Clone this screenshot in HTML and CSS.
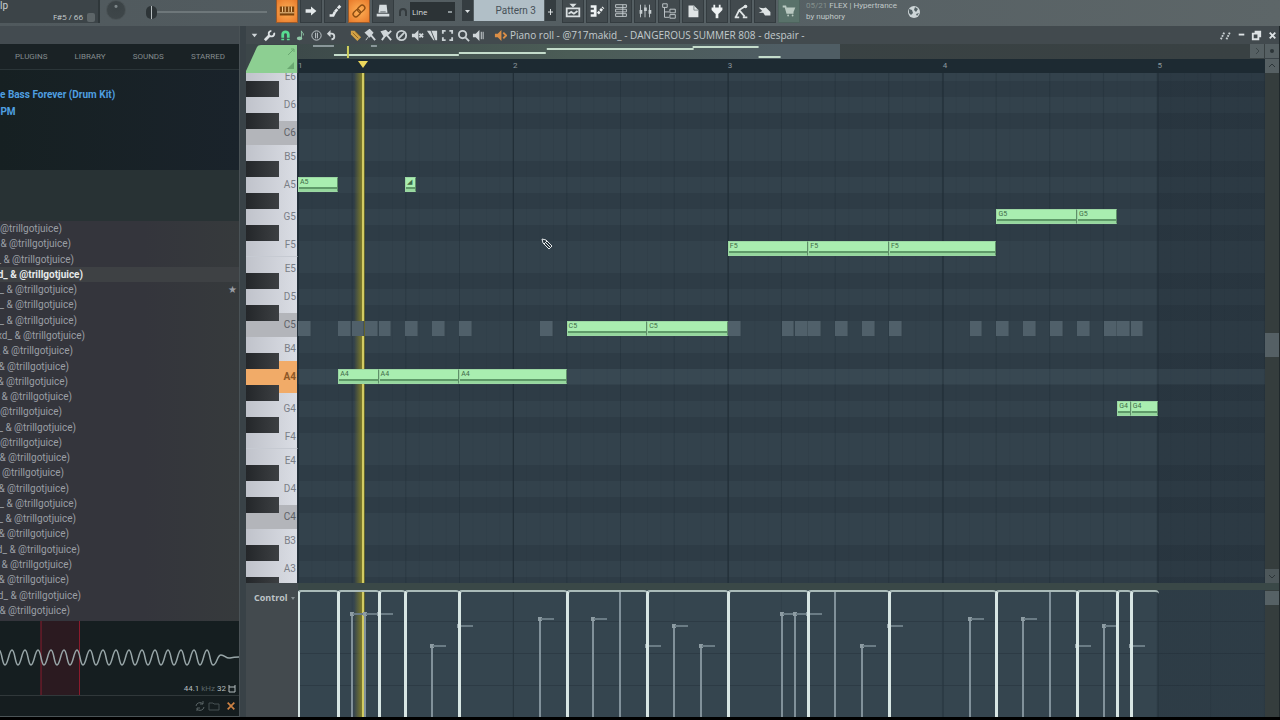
FILE: index.html
```
<!DOCTYPE html>
<html lang="en">
<head>
<meta charset="utf-8">
<title>Piano roll</title>
<link rel="stylesheet" href="styles.css">
</head>
<body>
<div class="app">
	<!-- S toolbar -->
	<header class="toolbar">
		<div class="hint">
			<span class="hint_file">lp</span>
			<span class="hint_note">F#5 / 66 <i class="hint_led"></i></span>
		</div>
		<span class="knob"></span>
		<input class="pitch" type="range" min="0" max="100" value="0" aria-label="Pitch">
		<div class="modes">
			<button class="bt on" title="Typing keyboard"><svg viewBox="0 0 20 20"><path d="M2 5h16v10H2z" fill="#7a430d"/><path d="M5 5v6M8 5v6M12 5v6M15 5v6M2 12h16" stroke="#ffd79b"/></svg></button>
			<button class="bt" title="Step"><svg viewBox="0 0 20 20"><path d="M4 8h6V5l6 5-6 5v-3H4z" fill="#e3e8ea"/></svg></button>
			<button class="bt" title="Slide"><svg viewBox="0 0 20 20"><path d="M4 15h4l2-4" stroke="#e3e8ea" stroke-width="3"/><path d="M10 11l6-7" stroke="#e3e8ea" stroke-width="3" stroke-dasharray="4 1"/></svg></button>
			<button class="bt on" title="Link"><svg viewBox="0 0 20 20"><g transform="rotate(-45 10 10)" stroke="#8c4d12" stroke-width="1.5"><rect x="2" y="7" width="9" height="6" rx="3"/><rect x="9" y="7" width="9" height="6" rx="3"/></g></svg></button>
			<button class="bt" title="Metronome"><svg viewBox="0 0 20 20"><path d="M6 3h8l1 9H5zM3 13h14v3H3z" fill="#d5dcdf"/><path d="M7 11h6" stroke="#596265"/></svg></button>
		</div>
		<svg class="magnet" viewBox="0 0 10 10"><path d="M2 9V5a3 3 0 0 1 6 0v4" stroke="#343b3e" stroke-width="2"/></svg>
		<select class="snap" aria-label="Snap"><option>Line</option></select>
		<div class="pattern">
			<button class="bt_s" title="Patterns"><svg viewBox="0 0 11 20"><path d="M3 9h5l-2.500 3z" fill="#dce1e3"/></svg></button>
			<input type="text" value="Pattern 3" aria-label="Pattern name">
			<button class="bt_s" title="New pattern"><svg viewBox="0 0 11 20"><path d="M3 11h5M5.500 8v6" stroke="#dce1e3"/></svg></button>
		</div>
		<div class="windows">
			<button class="bt" title="Playlist"><svg viewBox="0 0 20 20"><path d="M3 7h14v9H3zM5 13l3-2 3 2 4-3" stroke="#d9dfe1" stroke-width="2"/><path d="M6 2h8l-4 4z" fill="#d9dfe1"/></svg></button>
			<button class="bt" title="Piano roll"><svg viewBox="0 0 20 20"><path d="M3 5h5v10H3M3 10h6" stroke="#eef2f3" stroke-width="3"/><path d="M11 13l6-7" stroke="#eef2f3" stroke-width="3" stroke-dasharray="3 1"/></svg></button>
			<button class="bt" title="Channel rack"><svg viewBox="0 0 20 20"><path d="M4 3h12v3H4zM4 8h12v3H4zM4 13h12v3H4zM12 3v13" stroke="#c7ced1"/></svg></button>
			<button class="bt" title="Mixer"><svg viewBox="0 0 20 20"><path d="M5 3v14M10 3v14M15 3v14" stroke="#c7ced1"/><path d="M4 9h3v4H4zM9 6h3v4H9zM14 9h3v4h-3z" fill="#c7ced1"/></svg></button>
			<button class="bt" title="Browser"><svg viewBox="0 0 20 20"><path d="M3 2h5v4H3zM5 6v11h5M5 11h5M11 8h6v4h-6zM11 14h6v4h-6z" stroke="#c7ced1"/></svg></button>
			<button class="bt" title="Project"><svg viewBox="0 0 20 20"><path d="M5 4h6l5 5v8H5z" fill="#dfe4e5"/><path d="M11 4v5h5" stroke="#7b8588"/></svg></button>
			<button class="bt" title="Plugins"><svg viewBox="0 0 20 20"><path d="M7 3v4M13 3v4" stroke="#eef2f3" stroke-width="2"/><path d="M4 6h12v3l-4 4H8L4 9z" fill="#eef2f3"/><path d="M10 12v6" stroke="#eef2f3" stroke-width="3"/></svg></button>
			<button class="bt" title="Render"><svg viewBox="0 0 20 20"><path d="M4 17L8 9l8-5M8 9l6 7M3 17h5M12 17h5" stroke="#dfe4e5" stroke-width="2"/><circle cx="15" cy="5" r="2" fill="#dfe4e5"/></svg></button>
			<button class="bt" title="Touch"><svg viewBox="0 0 20 20"><path d="M3 6l5 1 3-1 5 5v4h-6l-2-3H3l4-2z" fill="#dfe4e5"/></svg></button>
			<button class="bt shop" title="Shop"><svg viewBox="0 0 20 20"><path d="M3 5h3l2 7h7" stroke="#b9c9c1" stroke-width="2"/><path d="M7 6h10l-2 5H8z" fill="#b9c9c1"/><circle cx="9" cy="15" r="1" fill="#b9c9c1"/><circle cx="14" cy="15" r="1" fill="#b9c9c1"/></svg></button>
		</div>
		<div class="news"><p><span>05/21</span> FLEX | Hypertrance</p><p>by nuphory</p></div>
		<svg class="globe" viewBox="0 0 14 14"><circle cx="7" cy="7" r="6" fill="#cdd5d7"/><path d="M2 4l3 1 1 3-2 2-2-2zM8 2l3 2-2 3-2-2zM9 9l3-1-2 3z" fill="#536064"/></svg>
	</header>
	<!-- E toolbar -->

	<div class="work">
		<!-- S browser -->
		<aside class="browser">
			<div class="browser_head"></div>
			<nav class="tabs"><a href="#">PLUGINS</a><a href="#">LIBRARY</a><a href="#">SOUNDS</a><a href="#">STARRED</a></nav>
			<div class="kit"><p>e Bass Forever (Drum Kit)</p><p>BPM</p></div>
			<div class="kit_foot"></div>
			<ul class="files" id="files"></ul>
			<div class="wave">
				<svg viewBox="0 0 239 74" preserveAspectRatio="none">
					<path d="M41 0h38v74H41z" fill="#2b1a20"/>
					<path d="M41 0v74M79.500 0v74" stroke="#8c1a2c"/>
					<path id="wave" stroke="#97a5a7" stroke-width="1.500"/>
				</svg>
				<span class="rate">44.1 <em>kHz</em> 32 <svg viewBox="0 0 8 8"><path d="M1 2h6v5H1zM0 1h2M6 1h2" stroke="#b4bdbf"/></svg></span>
			</div>
			<div class="browser_foot">
				<button title="Refresh"><svg viewBox="0 0 12 12"><path d="M2 6a4 4 0 0 1 7-2M10 7a4 4 0 0 1-7 2M9 1v3H6M3 11V8h3" stroke="#596365"/></svg></button>
				<button title="Folder"><svg viewBox="0 0 12 12"><path d="M1 3h4l1 1h5v6H1z" stroke="#465053"/></svg></button>
				<button class="bt_close" title="Close"><svg viewBox="0 0 12 12"><path d="M2 2l8 8M10 2l-8 8" stroke="#cd8244" stroke-width="2"/></svg></button>
			</div>
		</aside>
		<!-- E browser -->

		<!-- S piano roll -->
		<main class="roll">
			<div class="titlebar">
				<div class="tools tools_l">
					<button title="Menu"><svg viewBox="0 0 14 14"><path d="M4 5h6l-3 4z" fill="#cfd5d8"/></svg></button>
					<button title="Tools"><svg viewBox="0 0 14 14"><path d="M2 12l5-5" stroke="#dce1e3" stroke-width="3"/><path d="M12 4a3 3 0 1 1-3-2" stroke="#dce1e3" stroke-width="2"/></svg></button>
					<button title="Snap"><svg viewBox="0 0 14 14"><path d="M4 12V6a3 3 0 0 1 6 0v6" stroke="#58dd91" stroke-width="3"/><path d="M2 10h4M8 10h4" stroke="#3f474c"/></svg></button>
					<button title="Stamp"><svg viewBox="0 0 14 14"><path d="M8 10V2c0 2 3 2 2 5" stroke="#8fc7a6"/><ellipse cx="6" cy="10" rx="3" ry="2" fill="#8fc7a6"/></svg></button>
					<button title="Ghosts"><svg viewBox="0 0 14 14"><circle cx="7" cy="7" r="5" stroke="#c5cccf"/><path d="M6 4v6M8 4v6" stroke="#c5cccf"/></svg></button>
					<button title="Undo"><svg viewBox="0 0 14 14"><path d="M4 5h3a3 3 0 0 1 0 6" stroke="#d0d6d9" stroke-width="2"/><path d="M2 5l4-4v8z" fill="#d0d6d9"/></svg></button>
				</div>
				<div class="tools tools_r">
					<button title="Draw"><svg viewBox="0 0 14 14"><path d="M2 2h4l7 7-4 4-7-7z" fill="#d3a247"/><path d="M4 4l6 6M7 3l5 5" stroke="#8a6322"/></svg></button>
					<button title="Paint"><svg viewBox="0 0 14 14"><path d="M2 4l4-3 3 3-3 4zM7 6l5 6" fill="#d0d6d9" stroke="#d0d6d9" stroke-width="2"/><path d="M2 12l3-4" stroke="#d0d6d9"/></svg></button>
					<button title="Drums"><svg viewBox="0 0 14 14"><path d="M2 3l4-1 3 3-4 3zM7 6l5 6M9 5l3-3M2 12l3-4" fill="#d0d6d9" stroke="#d0d6d9" stroke-width="2"/></svg></button>
					<button title="Delete"><svg viewBox="0 0 14 14"><circle cx="7" cy="7" r="5" stroke="#c9d0d3" stroke-width="2"/><path d="M4 10l6-6" stroke="#c9d0d3" stroke-width="2"/></svg></button>
					<button title="Mute"><svg viewBox="0 0 14 14"><path d="M1 5h3l4-4v12L4 9H1z" fill="#d0d6d9"/><path d="M9 5l4 4M13 5L9 9" stroke="#d0d6d9" stroke-width="2"/></svg></button>
					<button title="Slice"><svg viewBox="0 0 14 14"><path d="M1 2h11v10H8z" fill="#d0d6d9"/><path d="M5 1l5 12" stroke="#454d51"/></svg></button>
					<button title="Select"><svg viewBox="0 0 14 14"><path d="M2 5V2h3M9 2h3v3M12 9v3H9M5 12H2V9" stroke="#c9d0d3" stroke-width="2"/></svg></button>
					<button title="Zoom"><svg viewBox="0 0 14 14"><circle cx="6" cy="6" r="4" stroke="#c9d0d3" stroke-width="2"/><path d="M9 9l4 4" stroke="#c9d0d3" stroke-width="2"/></svg></button>
					<button title="Playback"><svg viewBox="0 0 14 14"><path d="M1 5h3l4-4v12L4 9H1z" fill="#d0d6d9"/><path d="M10 3v8M12 3v8" stroke="#d0d6d9"/></svg></button>
				</div>
				<svg class="channel" viewBox="0 0 14 14"><path d="M1 5h3l4-4v12L4 9H1z" fill="#db8e46"/><path d="M10 4l3 3-3 3" stroke="#db8e46" stroke-width="2"/></svg>
				<h1>Piano roll - @717makid_ - DANGEROUS SUMMER 808 - despair -</h1>
				<div class="tools tools_win">
					<button title="Detach"><svg viewBox="0 0 14 14"><path d="M2 11l4-8M8 11l4-8" stroke="#c9d0d3" stroke-width="2" stroke-dasharray="2 1"/></svg></button>
					<button title="Minimize"><svg viewBox="0 0 14 14"><path d="M4 6h6" stroke="#dde2e4" stroke-width="2"/></svg></button>
					<button title="Maximize"><svg viewBox="0 0 14 14"><path d="M3 5h6v6H3zM5 3h6v6" stroke="#dde2e4" stroke-width="2"/></svg></button>
					<button title="Close"><svg viewBox="0 0 14 14"><path d="M4 4l6 6M10 4l-6 6" stroke="#dde2e4" stroke-width="2"/></svg></button>
				</div>
			</div>
			<div class="corner">
				<svg viewBox="0 0 52 29"><path d="M0 29V27L11 3q1-2 4-2H51V29z" fill="#8dcf92"/><path d="M42 11l6-6M45 5h3v3" stroke="#6aa871"/><path d="M41 25l7-7v7z" fill="#6aa871"/></svg>
			</div>
			<div class="minimap">
				<div class="minimap_view"><svg viewBox="0 0 542 15" preserveAspectRatio="none"><path d="M15 2h21M73 2h6" stroke="#8a979a" stroke-width="2"/><path d="M36 11h125M161 9h87M249 5h147M395 3h66M461 13h22" stroke="#c4dccb" stroke-width="2"/><path d="M50 2v12" stroke="#cfd05e" stroke-width="2"/></svg></div>
			</div>
			<div class="mini_bt">
				<button title="Scroll right"><svg viewBox="0 0 14 14"><path d="M6 4l3 3-3 3" stroke="#3a4447"/></svg></button>
				<button title="Zoom"><svg viewBox="0 0 14 14"><circle cx="7" cy="7" r="2" fill="#2c3538"/></svg></button>
			</div>
			<div class="timeline"><span>1</span><span>2</span><span>3</span><span>4</span><span>5</span><i class="marker"></i></div>
			<div class="scroll_top"><button title="Scroll up"><svg viewBox="0 0 14 14"><path d="M4 8l3-3 3 3" stroke="#2c3538"/></svg></button></div>
			<div class="keys" id="keys"></div>
			<div class="grid" id="grid">
				<i class="playhead"></i>
				<svg class="cursor" viewBox="0 0 14 14"><path d="M2 2l4 1 6 6-3 3-6-6z" fill="#26323a" stroke="#e3e8ea"/><path d="M5 5l5 5M7 4l-3 3" stroke="#e3e8ea"/></svg>
			</div>
			<div class="scrollbar"><i class="thumb"></i><button title="Scroll down"><svg viewBox="0 0 14 14"><path d="M4 6l3 3 3-3" stroke="#2c3538"/></svg></button></div>
			<div class="splitter"></div>
			<div class="ctl_name"><button>Control <svg viewBox="0 0 6 6"><path d="M1 2h4L3 5z" fill="#858e92"/></svg></button></div>
			<div class="ctl" id="ctl"><i class="playhead"></i></div>
			<div class="ctl_scroll"><i></i></div>
		</main>
		<!-- E piano roll -->
	</div>
</div>
<script src="script.js"></script>
</body>
</html>
```
FILE: styles.css
```
*{box-sizing:border-box;}
body{margin:0;background-color:#000;font-family:Roboto,"Open Sans",sans-serif;font-size:10px;color:#b0b6b8;}
p,ul,h1{margin:0;padding:0;}
ul{list-style:none;}
a{color:inherit;text-decoration:none;}
button{margin:0;padding:0;border:0;background:none;color:inherit;font:inherit;}
svg{display:block;fill:none;}

.app{display:flex;flex-direction:column;height:100vh;min-height:480px;padding-bottom:3px;overflow:hidden;}
.work{display:flex;flex:1;min-height:0;background-color:#394247;}

/* S toolbar */
.toolbar{display:flex;flex:none;height:26px;background:linear-gradient(to right,#50595d,#566064 60%,#5d6668);overflow:hidden;}
.hint{display:flex;flex-direction:column;width:100px;height:23px;padding-right:3px;background-color:#3c4448;border-right:2px solid #2f373a;color:#c9cfd1;line-height:12px;}
.hint_note{display:flex;justify-content:flex-end;align-items:center;gap:4px;font:8px/10px "Open Sans",sans-serif;}
.hint_led{width:8px;height:9px;background-color:#5d6568;border-radius:2px;}
.knob{width:20px;height:20px;margin:0 20px 0 6px;border:1px solid #4b5356;border-radius:50%;background:radial-gradient(circle at 50% 30%,#7d8689 1px,#3b4346 2px,#3f474a);}
.pitch{-webkit-appearance:none;appearance:none;width:121px;height:24px;margin:0 9px 0 0;background:none;}
.pitch::-webkit-slider-runnable-track{height:2px;background-color:#6e777a;}
.pitch::-webkit-slider-thumb{-webkit-appearance:none;width:11px;height:13px;margin-top:-5px;border-radius:5px;background:linear-gradient(to right,#2d3437 5px,#b7bec0 5px,#b7bec0 6px,#2d3437 6px);}
.modes,.windows{display:flex;gap:2px;}
.bt{width:22px;height:23px;padding:1px;border:1px solid #343c40;border-top:0;background-color:#424a4e;}
.bt.on{background:radial-gradient(circle,#ffb257,#e8792a);border-color:#9a5a2a;}
.bt.shop{background-color:#59726a;border-color:#4e645e;}
.bt svg{width:18px;height:20px;}
.magnet{width:10px;height:24px;margin:0 2px 0 4px;}
.snap{-webkit-appearance:none;appearance:none;width:45px;height:19px;margin-top:2px;padding:0 2px;border:0;border-radius:0;background:linear-gradient(#8d9699,#8d9699) 38px 9px/4px 2px no-repeat #2c3336;color:#d6dbdd;font:8px "Open Sans",sans-serif;}
.pattern{display:flex;gap:1px;width:94px;height:21px;margin:0 6px 0 7px;}
.pattern input{width:70px;padding:0 8px 0 0;border:0;background-color:#b1bfc7;color:#475158;font-family:inherit;font-size:10px;text-align:right;}
.bt_s{width:11px;background-color:#353d41;}
.bt_s svg{width:11px;height:20px;}
.news{margin-left:6px;color:#c0c8c8;font-size:8px;line-height:11px;white-space:nowrap;}
.news span{color:#84908d;}
.globe{width:14px;height:24px;margin-left:10px;}
/* E toolbar */

/* S browser */
.browser{display:flex;flex-direction:column;width:240px;margin-right:6px;border-right:1px solid #4a5256;background-color:#343b3f;}
.browser_head{flex:none;height:18px;background-color:#434b50;}
.tabs{display:flex;flex:none;justify-content:space-between;height:25px;padding:0 14px 0 15px;background-color:#1a2225;color:#838b8d;font-size:8px;line-height:25px;}
.kit{flex:none;height:101px;padding-top:16px;border-top:1px solid #2b3538;background:linear-gradient(to right,#162022,#1a232b);color:#4f9fe0;font-weight:bold;line-height:17px;}
.kit p{white-space:nowrap;}
.kit p+p{text-indent:-6px;}
.kit_foot{flex:none;height:51px;background-color:#283234;}
.files{display:flex;flex:1;flex-direction:column;min-height:0;padding-bottom:3px;background:linear-gradient(to right,#34353c 60%,#363a3c);color:#9a9ea4;overflow:hidden;}
.files li{display:flex;flex:1;justify-content:space-between;align-items:center;min-height:0;padding-right:2px;line-height:15px;white-space:nowrap;}
.files li a{display:flex;justify-content:flex-end;}
.files .sel{background-color:#3e4144;color:#e6e9ea;font-weight:bold;}
.wave{position:relative;flex:none;height:75px;background-color:#151e20;border-bottom:1px solid #30383a;}
.wave>svg{width:100%;height:74px;}
.rate{position:absolute;right:3px;bottom:0;display:flex;gap:2px;align-items:center;color:#b4bdbf;font-size:8px;line-height:12px;}
.rate em{color:#5b6567;font-style:normal;}
.rate svg{width:8px;height:8px;}
.browser_foot{display:flex;flex:none;justify-content:flex-end;align-items:center;gap:2px;height:21px;padding-right:3px;border-bottom:1px solid #4b5457;background-color:#151d1f;}
.browser_foot svg{width:12px;height:12px;}
.browser_foot .bt_close{margin-left:4px;}
.bt_close svg{width:10px;height:10px;}
/* E browser */

/* S piano roll */
.roll{display:grid;flex:1;grid-template-columns:52px 1fr 14px;grid-template-rows:18px 15px 14px minmax(0,1fr) 7px 127px;min-width:0;border-right:1px solid #20282b;}
.titlebar{display:flex;grid-column:1/4;align-items:center;background-color:#424a4e;color:#c3cacd;}
.titlebar svg{width:13px;height:13px;}
.titlebar h1{flex:1;font:10px/18px "Open Sans",sans-serif;white-space:nowrap;}
.tools{display:flex;justify-content:space-between;}
.tools_l{width:90px;margin-left:2px;}
.tools_r{width:136px;margin-left:11px;}
.titlebar .channel{margin:0 3px 0 9px;}
.tools_win{width:60px;}
.corner{grid-row:2/4;background-color:#3c4649;}
.corner svg{width:52px;height:29px;}
.minimap{background:linear-gradient(to right,#3a4343,#394143);}
.minimap_view{width:56%;height:15px;background:linear-gradient(to right,#3d4a4a,#4b5c56 50%,#4f5d64 90%);}
.minimap_view svg{width:100%;height:15px;}
.mini_bt{display:flex;justify-content:flex-end;gap:1px;}
.mini_bt button,.scroll_top button{flex:none;width:14px;height:14px;background-color:#566063;}
.timeline{position:relative;display:grid;grid-template-columns:repeat(4,2fr) 1fr;background-color:#1d2a32;color:#8b989e;font-size:8px;line-height:14px;}
.marker{position:absolute;left:calc(100%*4.8/72);top:2px;margin-left:-4px;border:5px solid transparent;border-top:7px solid #ecd75c;border-bottom:0;}
.keys{overflow:hidden;background-color:#d3d6de;}
.key{position:relative;height:24px;padding-right:1px;border-right:1px solid #23303a;background:linear-gradient(to right,#c0c3cb,#dadde4);color:#7a7e86;line-height:24px;text-align:right;}
.key:first-child{margin-top:-8px;}
.key_D,.key_G,.key_A{height:32px;line-height:32px;}
.key_C{background:#b3b5ba;color:#5c6066;}
.key_F{border-bottom:1px solid #c6cad2;}
.key_on{background:#f1ab68;color:#8e5826;font-weight:bold;}
.key_D:after,.key_E:after,.key_G:after,.key_A:after,.key_B:after{content:"";position:absolute;z-index:1;left:0;bottom:-8px;width:33px;height:16px;background:linear-gradient(to right,#24272a,#3c3f42);}
.grid,.ctl{position:relative;overflow:hidden;}
.grid{background:
	linear-gradient(to right,transparent 88.9%,rgba(24,34,44,.25) 88.9%),
	linear-gradient(to right,#202d36 1px,transparent 1px) 0 0/22.22% 100%,
	linear-gradient(to right,rgba(28,41,50,.3) 1px,transparent 1px) 0 0/5.55% 100%,
	linear-gradient(to right,rgba(28,41,50,.1) 1px,transparent 1px) 0 0/1.388% 100%,
	linear-gradient(#33424c 16px,#2e3c46 16px,#2e3c46 32px,#33424c 32px,#33424c 48px,#2e3c46 48px,#2e3c46 64px,#33424c 64px,#33424c 96px,#2e3c46 96px,#2e3c46 112px,#33424c 112px,#33424c 128px,#2e3c46 128px,#2e3c46 144px,#33424c 144px,#33424c 160px,#2e3c46 160px,#2e3c46 176px,#33424c 176px) 0 -8px/100% 192px;}
.ctl{background:
	linear-gradient(to right,transparent 88.9%,rgba(24,34,44,.25) 88.9%),
	linear-gradient(to right,#26343d 1px,transparent 1px) 0 0/22.22% 100%,
	linear-gradient(#2d3b45 1px,transparent 1px) 0 -1px/100% 32px,
	linear-gradient(to right,rgba(28,41,50,.2) 1px,transparent 1px) 0 0/5.55% 100%,#35454f;}
.note,.ghost,.lit{position:absolute;left:calc(100%*var(--s)/72);top:calc(16px*var(--r) - 8px);width:calc(100%*var(--l)/72);height:15px;}
.note{padding-left:1px;border:1px solid #9bd7a3;border-right-color:#5f8f69;background:linear-gradient(#a9eeb0 9px,#5f9a69 9px,#5f9a69 11px,#95d79d 11px);color:#3f6b49;font-size:7px;line-height:9px;}
.ghost{border-right:1px solid #43525b;background-color:#50606a;}
.lit{background-color:rgba(90,110,120,.15);}
.playhead{position:absolute;left:calc(100%*4.8/72);top:0;bottom:0;width:11px;margin-left:-8px;background:linear-gradient(to right,transparent,#7d7a2a 8px,#d2cb62 8px,#d2cb62 10px,#62632d 10px);}
.cursor{position:absolute;z-index:2;left:25%;top:164px;width:14px;height:14px;}
.scrollbar,.ctl_scroll{position:relative;display:flex;flex-direction:column;justify-content:flex-end;background-color:#353d3d;}
.scrollbar button{height:14px;background-color:#4d575a;}
.thumb{position:absolute;top:51%;left:0;right:0;height:24px;background-color:#556065;}
.splitter{grid-column:1/4;background:linear-gradient(to right,#424a4e 52px,#3a4847 52px);}
.ctl_name{padding-left:8px;background-color:#434a4e;color:#bdc3c6;}
.ctl_name button{display:flex;align-items:center;gap:2px;font:bold 9px/16px "Open Sans",sans-serif;}
.ctl_name svg{width:6px;height:6px;}
.ctl_scroll{justify-content:flex-start;padding-top:1px;}
.ctl_scroll i{height:14px;background-color:#566165;}
.vel,.gvel{position:absolute;bottom:0;left:calc(100%*var(--s)/72);margin-left:-1px;}
.vel{top:0;width:calc(100%*var(--l)/72 + 2px);border:solid #d8e6e4;border-width:2px 0 0 3px;border-top-color:#a9bab8;border-radius:4px 4px 0 0;}
.gvel{height:calc(1%*var(--v));width:15px;border-left:2px solid #81919a;}
.gvel:before{content:"";position:absolute;left:-3px;top:-2px;width:4px;height:4px;background-color:#8d9ca3;}
.gvel:after{content:"";position:absolute;left:0;top:-1px;width:13px;height:2px;background-color:#6b7c85;}
.gvel_full:before,.gvel_full:after{display:none;}
/* E piano roll */
```
FILE: script.js
```
// rows are counted from E6 downwards, start and length are in steps
var notes = [
	['A5', 7, 0, 3], ['◢', 7, 8, .75],
	['A4', 19, 3, 3], ['A4', 19, 6, 6], ['A4', 19, 12, 8],
	['C5', 16, 20, 6], ['C5', 16, 26, 6],
	['F5', 11, 32, 6], ['F5', 11, 38, 6], ['F5', 11, 44, 8],
	['G5', 9, 52, 6], ['G5', 9, 58, 3],
	['G4', 21, 61, 1], ['G4', 21, 62, 2]
];
var ghosts = [0, 3, 4, 5, 6, 8, 10, 12, 18, 32, 36, 37, 38, 40, 42, 44, 50, 52, 54, 56, 58, 60, 61, 62];
var levels = [[4, 81], [5, 81], [6, 81], [10, 56], [12, 72], [18, 77], [22, 77], [24, 100], [26, 56], [28, 72], [30, 56],
	[36, 81], [37, 81], [38, 81], [40, 100], [42, 56], [44, 72], [50, 77], [54, 77], [56, 100], [58, 56], [60, 72], [62, 56]];
var stems = [0, 3, 6, 8, 12, 20, 26, 32, 38, 44, 52, 58, 61, 62, 64];
var keys = 'E6 D6 C6 B5 A5 G5 F5 E5 D5 C5 B4 A4 G4 F4 E4 D4 C4 B3 A3 G3'.split(' ');
// visible tail of each file name and where it ends
var files = [['', 62], ['_ ', 71], ['_ ', 74], ['xd_ ', 83], ['d_ ', 77], ['d_ ', 77], ['d_ ', 77], ['txd_ ', 85], ['_ ', 73],
	['', 69], ['', 68], ['_ ', 72], ['', 62], ['d_ ', 76], ['', 62], ['_ ', 70], ['', 64], ['', 69], ['d_ ', 77],
	['d_ ', 76], ['', 69], ['xd_ ', 80], ['_ ', 72], ['', 69], ['xd_ ', 81], ['_ ', 70]];

function add(parent, tag, cls, text, vars) {
	var el = document.createElement(tag);
	el.className = cls;
	el.textContent = text;
	for (var k in vars) el.style.setProperty(k, vars[k]);
	parent.appendChild(el);
	return el;
}

var grid = document.getElementById('grid');
add(grid, 'i', 'lit', '', {'--r': 19, '--s': 0, '--l': 72});
ghosts.forEach(function (s) {
	add(grid, 'i', 'ghost', '', {'--r': 16, '--s': s, '--l': .95});
});
notes.forEach(function (n) {
	add(grid, 'div', 'note', n[0], {'--r': n[1], '--s': n[2], '--l': n[3]});
});

var ctl = document.getElementById('ctl');
levels.forEach(function (g) {
	add(ctl, 'i', g[1] == 100 ? 'gvel gvel_full' : 'gvel', '', {'--s': g[0], '--v': g[1]});
});
for (var i = 0; i < stems.length - 1; i++) {
	add(ctl, 'i', 'vel', '', {'--s': stems[i], '--l': stems[i + 1] - stems[i]});
}

keys.forEach(function (k) {
	add(document.getElementById('keys'), 'div', 'key key_' + k[0] + (k == 'A4' ? ' key_on' : ''), k);
});

files.forEach(function (f, n) {
	var li = add(document.getElementById('files'), 'li', n == 3 ? 'sel' : '', '');
	var a = add(li, 'a', '', f[0] + '& @trillgotjuice)', {width: f[1] + 'px'});
	a.href = '#';
	if (n == 4) add(li, 'span', 'star', '★');
});

var d = 'M-8 44';
for (i = 0; i < 17; i++) d += 'c3 0 4-15 7-15s3 15 6 15';
document.getElementById('wave').setAttribute('d', d + 'c4 0 4-10 8-10s5 4 9 3 5-1 9-1');
```
